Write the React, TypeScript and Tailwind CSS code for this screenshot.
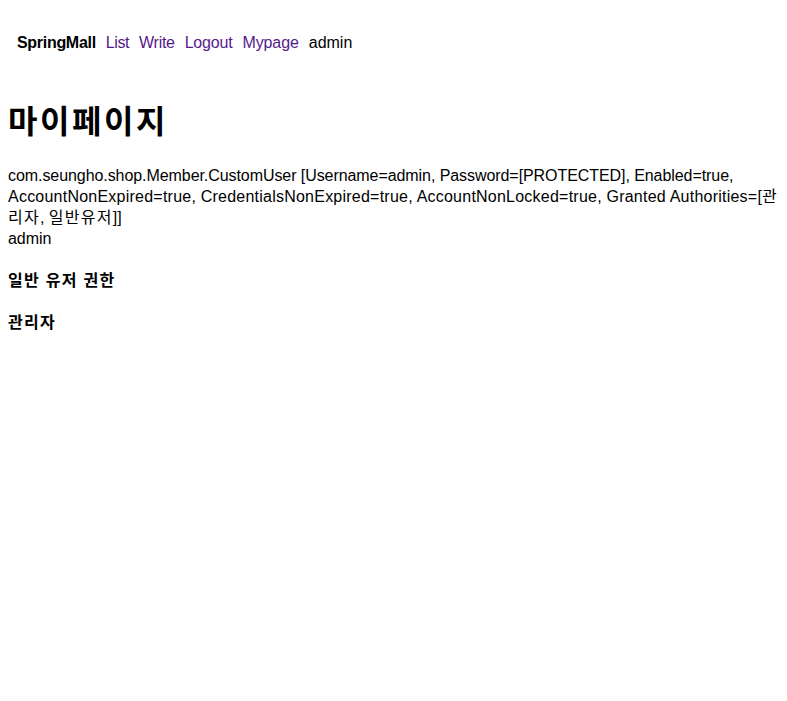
const ko = "tracking-[0.08em]";

export default function App() {
  return (
    <div className="min-h-[701px] bg-white text-black text-[16px] font-['Liberation_Sans','Noto_Sans_CJK_KR',sans-serif]">
      <nav className="flex items-center gap-[10px] pl-[17px] pt-[32px] pb-[27px] leading-[21px]">
        <span className="font-bold tracking-[-0.3px]">SpringMall</span>
        <a href="#" className="text-[#551a8b] tracking-[-0.4px]">List</a>
        <a href="#" className="text-[#551a8b] tracking-[-0.3px]">Write</a>
        <a href="#" className="text-[#551a8b] tracking-[-0.2px]">Logout</a>
        <a href="#" className="text-[#551a8b] tracking-[-0.1px]">Mypage</a>
        <span className="tracking-[0px]">admin</span>
      </nav>
      <div className="flex flex-col px-2">
        <h1 className={`mt-[21px] mb-[21px] text-[32px] font-bold leading-[43px] ${ko}`}>마이페이지</h1>
        <div className="leading-[21px] tracking-[-0.07px]">
          <div>
            com.seungho.shop.Member.CustomUser [Username=admin, Password=[PROTECTED], Enabled=true,{" "}
            <span className="tracking-[0.23px]">
              AccountNonExpired=true, CredentialsNonExpired=true, AccountNonLocked=true, Granted Authorities=[
            </span>
            <span className={ko}>관</span>
            <br />
            <span className={ko}>리자</span>, <span className={ko}>일반유저</span>]]
          </div>
          <div>admin</div>
        </div>
        <h4 className={`mt-[21px] font-bold leading-[21px] ${ko}`}>일반 유저 권한</h4>
        <h4 className={`mt-[21px] font-bold leading-[21px] ${ko}`}>관리자</h4>
      </div>
    </div>
  );
}
